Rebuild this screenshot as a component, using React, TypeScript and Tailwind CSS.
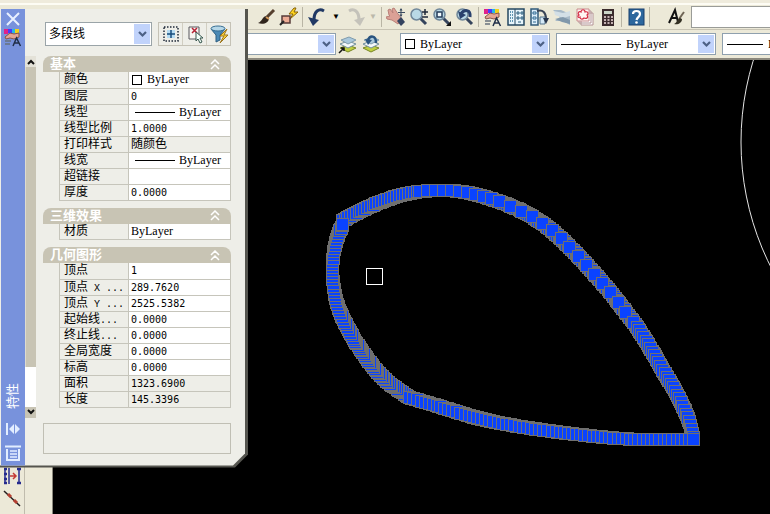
import { ReactNode, useState } from "react";

type Point = [number, number];

// Each run of the selected polyline has its own vertex density.
const runs: { gap: number; points: Point[] }[] = [
  { gap: 3, points: [[343, 221], [362, 211], [380, 203], [400, 196], [420, 192]] },
  { gap: 8, points: [[420, 192], [440, 191], [460, 192], [480, 196], [500, 202]] },
  { gap: 12, points: [[500, 202], [521, 211], [540, 222], [559, 237], [584, 262], [611, 293], [638, 328]] },
  { gap: 4, points: [[638, 328], [651, 349], [663, 370], [678, 396], [689, 420], [694, 440]] },
  { gap: 2, points: [[410, 398], [390, 384], [376, 370], [364, 354], [354, 339]] },
  { gap: 3, points: [[354, 339], [344, 320], [336, 298], [333, 270], [336, 244], [343, 225]] },
  { gap: 4, points: [[410, 398], [440, 407], [480, 419], [520, 427], [570, 434], [620, 439], [660, 440], [694, 440]] },
];

function samplePoints(points: Point[], gap: number) {
  const out: Point[] = [];
  for (let i = 0; i < points.length - 1; i++) {
    const p0 = points[Math.max(0, i - 1)];
    const p1 = points[i];
    const p2 = points[i + 1];
    const p3 = points[Math.min(points.length - 1, i + 2)];
    for (let t = 0; t < 1; t += 0.01) {
      const at = (k: 0 | 1) =>
        0.5 *
        (2 * p1[k] +
          (p2[k] - p0[k]) * t +
          (2 * p0[k] - 5 * p1[k] + 4 * p2[k] - p3[k]) * t * t +
          (3 * p1[k] - p0[k] - 3 * p2[k] + p3[k]) * t * t * t);
      const next: Point = [at(0), at(1)];
      const last = out[out.length - 1];
      if (!last || Math.hypot(next[0] - last[0], next[1] - last[1]) >= gap) out.push(next);
    }
  }
  out.push(points[points.length - 1]);
  return out;
}

// The tightly packed grips lie under the ones at each run's own spacing.
const grips = [
  ...runs.flatMap((run) => samplePoints(run.points, 2)),
  ...runs.flatMap((run) => samplePoints(run.points, run.gap)),
];

function Icon({ children }: { children: ReactNode }) {
  return (
    <svg width="20" height="20" viewBox="0 0 20 20" fill="none" aria-hidden="true">
      {children}
    </svg>
  );
}

function ToolButton({ label, children }: { label: string; children: ReactNode }) {
  return (
    <button type="button" aria-label={label} className="flex h-5 w-[23px] shrink-0 items-center justify-center">
      {children}
    </button>
  );
}

function Separator() {
  return <div className="mx-[2px] h-5 w-px shrink-0 bg-[#b9b5a5]" />;
}

function Chevron() {
  return (
    <span className="pointer-events-none flex h-full w-4 shrink-0 items-center justify-center bg-[#c1d3fb]">
      <svg width="9" height="7" viewBox="0 0 9 7" fill="none" aria-hidden="true">
        <path d="M1 1l3.500 3.500L8 1" stroke="#4d6185" strokeWidth="2.200" />
      </svg>
    </span>
  );
}

function PropertiesIcon() {
  return (
    <Icon>
      <path d="M1 2h4v5H1z" fill="#e0218a" />
      <path d="M5 2h4v4H5z" fill="#4a36ff" />
      <path d="M9 2h3v4H9z" fill="#24b8e8" />
      <path d="M12 2h4v4h-4z" fill="#f0d21c" />
      <path d="M2 10l5-4 4 1 5-1v4l-5 2-4-1-4 1z" fill="#e5a593" stroke="#875448" />
      <path d="M2 14h6M2 17h5" stroke="#67717d" strokeWidth="1.500" />
      <path d="M10 19l3.500-8 4 8M11.500 16h5" stroke="#202e48" strokeWidth="1.500" />
    </Icon>
  );
}

function Magnifier({ children }: { children?: ReactNode }) {
  return (
    <Icon>
      <path d="M11 11l6 6" stroke="#34435c" strokeWidth="3" />
      <circle cx="7.500" cy="7.500" r="5.500" fill="#b9d9e6" stroke="#70879a" strokeWidth="1.500" />
      {children}
    </Icon>
  );
}

function Layers({ children }: { children?: ReactNode }) {
  return (
    <Icon>
      <path d="M2 14l8-3 8 3-8 4z" fill="#bfcf42" stroke="#788625" />
      <path d="M2 10l8-3 8 3-8 4z" fill="#f4f8fa" stroke="#73909d" />
      <path d="M3 6l8-3 7 3-8 4z" fill="#a9c8dc" stroke="#809cad" />
      {children}
    </Icon>
  );
}

function StandardToolbar() {
  return (
    <div className="flex h-6 items-center overflow-hidden bg-[#ece9d8] pl-[254px]">
      <ToolButton label="画笔">
        <Icon>
          <path d="M18 3l-7 7" stroke="#56402f" strokeWidth="3" />
          <path d="M11 9c-5 0-4 5-9 7 5 2 11 0 11-5z" fill="#30251d" />
          <path d="M10 10l3 2" stroke="#d39a5a" strokeWidth="2" />
        </Icon>
      </ToolButton>
      <ToolButton label="特性匹配">
        <Icon>
          <path d="M15 1l-5 6h4l-3 5 8-7h-4l2-4z" fill="#ffd51e" stroke="#87630a" />
          <path d="M3 9h8v7H3z" fill="#ecab94" stroke="#573b38" strokeWidth="1.500" />
          <path d="M1 18l4-4" stroke="#252525" strokeWidth="2" />
        </Icon>
      </ToolButton>
      <Separator />
      <ToolButton label="放弃">
        <Icon>
          <path d="M17 4C12 1 7 4 7 13" stroke="#203864" strokeWidth="3" />
          <path d="M1 10l11 3-6 6z" fill="#203864" />
        </Icon>
      </ToolButton>
      <span className="w-4 text-center text-[8px] text-black">▼</span>
      <ToolButton label="重做">
        <Icon>
          <path d="M3 4c5-3 10 0 10 9" stroke="#c4c2ba" strokeWidth="3" />
          <path d="M19 10L8 13l6 6z" fill="#c4c2ba" />
        </Icon>
      </ToolButton>
      <span className="w-3 text-center text-[8px] text-[#bbb8aa]">▼</span>
      <Separator />
      <ToolButton label="实时平移">
        <Icon>
          <path d="M3 8l-1-5 2-1 3 4-1-4 2-1 4 6 4 5-4 5-6-4-5-1-1-2 4-1z" fill="#dba196" stroke="#b98079" />
          <path d="M11 14l4-4 4 5-4 4z" fill="#34435f" />
          <path d="M15 2v7M12 5.500h7" stroke="#3b4a60" />
          <path d="M13.500 3.500L15 1l1.500 2.500zM13.500 7.500L15 10l1.500-2.500z" fill="#3b4a60" />
        </Icon>
      </ToolButton>
      <ToolButton label="实时缩放">
        <Magnifier>
          <path d="M13 5h6M16 2v6M13 10h6" stroke="#202a3a" strokeWidth="1.500" />
        </Magnifier>
      </ToolButton>
      <ToolButton label="窗口缩放">
        <Magnifier>
          <path d="M5 5h5v5H5z" fill="#f2fbff" stroke="#253b58" strokeWidth="1.500" />
          <path d="M19 14v5h-5z" fill="#111" />
        </Magnifier>
      </ToolButton>
      <ToolButton label="缩放上一个">
        <Magnifier>
          <path d="M15 10c1-8-6-8-9-3" stroke="#29416d" strokeWidth="3" />
          <path d="M3 4l8 4-6 4z" fill="#29416d" />
        </Magnifier>
      </ToolButton>
      <Separator />
      <ToolButton label="特性">
        <PropertiesIcon />
      </ToolButton>
      <ToolButton label="设计中心">
        <Icon>
          <path d="M2 2h16v16H2z" fill="#e7f5fc" stroke="#244760" strokeWidth="1.500" />
          <path d="M9 2v16" stroke="#244760" />
          <path d="M4 5h3M4 8h3M4 11h3M4 14h3" stroke="#36779b" strokeDasharray="1 1" strokeWidth="1.500" />
          <path d="M11 5h2v2h-2zM15 5h2v2h-2zM11 10h2v2h-2zM15 10h2v2h-2zM12 15h3" stroke="#285c7c" />
        </Icon>
      </ToolButton>
      <ToolButton label="工具选项板">
        <Icon>
          <path d="M2 2h7v16H2z" fill="#dceefb" stroke="#2f5979" strokeWidth="1.500" />
          <path d="M4 5h3v2H4zM4 10h3v2H4zM4 15h3" stroke="#2f6891" />
          <path d="M8 4c6-2 9 2 9 8" stroke="#394456" strokeWidth="2" />
          <path d="M11 10h5v7h-5z" fill="#d5e9f7" stroke="#55758d" />
          <path d="M14 11h6l-3 6z" fill="#27354c" />
        </Icon>
      </ToolButton>
      <ToolButton label="图纸集管理器">
        <Icon>
          <path d="M1 3h8l9 4v11l-7-4H3l5-4z" fill="#a8bac8" />
          <path d="M2 4l9 2 7-2v5l-7 2-8-3z" fill="#d3dfe6" />
          <path d="M3 12l8-2 7 3v4l-8-2z" fill="#8198ab" />
        </Icon>
      </ToolButton>
      <ToolButton label="标记集管理器">
        <Icon>
          <path d="M6 6h12v12H6zM4 4h12v12H4z" fill="#fff" stroke="#b39294" />
          <path d="M2 2h12v12H2z" fill="#fff4f2" stroke="#c98a8d" />
          <path d="M4 8c-2-2 0-4 2-3 0-3 4-3 4 0 3-1 4 2 2 3 2 3-1 4-3 3-2 2-4 1-4-1-2 1-3-1-1-2z" stroke="#d52d45" strokeWidth="1.200" />
        </Icon>
      </ToolButton>
      <ToolButton label="快速计算器">
        <Icon>
          <path d="M4 2h12v17H4z" fill="#3b2b2d" />
          <path d="M6 4h8v3H6z" fill="#cad4c6" />
          <path d="M6 10h9M6 13h9M6 16h9" stroke="#f1dddd" strokeWidth="1.500" strokeDasharray="2 1.500" />
        </Icon>
      </ToolButton>
      <Separator />
      <ToolButton label="帮助">
        <Icon>
          <rect x="3" y="2" width="15" height="16" fill="#2c679e" stroke="#163e6d" />
          <path d="M7 7c0-4 7-4 7 0 0 3-3 3-3.500 6" stroke="#fff" strokeWidth="2.200" />
          <circle cx="10.500" cy="15.500" r="1.300" fill="#fff" />
        </Icon>
      </ToolButton>
      <Separator />
      <div className="ml-3">
        <ToolButton label="文字样式">
          <Icon>
            <path d="M3 16L9 3l3 12M5 11h6" stroke="#111" strokeWidth="2" />
            <path d="M18 5l-5 7" stroke="#6f6555" strokeWidth="2" />
            <path d="M14 11c-3 1-3 5-6 6 4 1 8-1 8-5z" fill="#333023" />
          </Icon>
        </ToolButton>
      </div>
      <input aria-label="样式名称" className="ml-1 h-[22px] min-w-12 flex-1 border border-r-0 border-[#9a9c98] bg-white px-1" />
    </div>
  );
}

function BoxedSelect({ label, className, children }: { label: string; className: string; children: ReactNode }) {
  return (
    <div className={`flex h-[22px] shrink-0 items-center border border-[#8fa0ae] bg-white p-px ${className}`}>
      {children}
      <select aria-label={label} className="h-full min-w-0 flex-1 appearance-none bg-transparent font-['Liberation_Serif',serif] text-[12px] outline-none">
        <option>ByLayer</option>
      </select>
      <Chevron />
    </div>
  );
}

function LayerToolbar() {
  return (
    <div className="flex h-[29px] items-center overflow-hidden border-t border-[#c8c4b4] bg-[#ece9d8] pl-[200px]">
      <div className="flex h-[22px] w-[136px] shrink-0 items-center border border-[#8fa0ae] bg-white p-px">
        <select aria-label="图层" className="h-full min-w-0 flex-1 appearance-none bg-transparent outline-none" />
        <Chevron />
      </div>
      <ToolButton label="将对象的图层置为当前">
        <Layers>
          <path d="M1 19l5-5M3 14h3v3" stroke="#151515" strokeWidth="1.500" />
        </Layers>
      </ToolButton>
      <ToolButton label="上一个图层">
        <Layers>
          <path d="M15 9c0-8-6-8-8-3" stroke="#29537f" strokeWidth="2.500" />
          <path d="M4 5l7 1-4 5z" fill="#29537f" />
        </Layers>
      </ToolButton>
      <div className="mx-1 h-full w-px bg-[#aaa797]" />
      <div className="ml-[10px] flex flex-1 gap-[6px]">
        <BoxedSelect label="颜色控制" className="w-[150px] pl-1">
          <span className="mr-[5px] h-[10px] w-[10px] border border-black" />
        </BoxedSelect>
        <BoxedSelect label="线型控制" className="w-[160px] pl-1">
          <span className="mr-[5px] h-px w-[60px] bg-black" />
        </BoxedSelect>
        <BoxedSelect label="线宽控制" className="w-[160px] pl-1">
          <span className="mr-[5px] h-px w-[36px] bg-black" />
        </BoxedSelect>
      </div>
    </div>
  );
}

type Row = { label: string; suffix?: string; value: string; kind?: "color" | "line" | "layer" | "readonly" };

const sections: { title: string; rows: Row[] }[] = [
  {
    title: "基本",
    rows: [
      { label: "颜色", value: "ByLayer", kind: "color" },
      { label: "图层", value: "0" },
      { label: "线型", value: "ByLayer", kind: "line" },
      { label: "线型比例", value: "1.0000" },
      { label: "打印样式", value: "随颜色", kind: "readonly" },
      { label: "线宽", value: "ByLayer", kind: "line" },
      { label: "超链接", value: "" },
      { label: "厚度", value: "0.0000" },
    ],
  },
  { title: "三维效果", rows: [{ label: "材质", value: "ByLayer", kind: "layer" }] },
  {
    title: "几何图形",
    rows: [
      { label: "顶点", value: "1" },
      { label: "顶点", suffix: " X ...", value: "289.7620" },
      { label: "顶点", suffix: " Y ...", value: "2525.5382" },
      { label: "起始线", suffix: "...", value: "0.0000" },
      { label: "终止线", suffix: "...", value: "0.0000" },
      { label: "全局宽度", value: "0.0000" },
      { label: "标高", value: "0.0000" },
      { label: "面积", value: "1323.6900", kind: "readonly" },
      { label: "长度", value: "145.3396", kind: "readonly" },
    ],
  },
];

function RowValue({ row, id }: { row: Row; id: string }) {
  if (row.kind === "readonly") {
    return (
      <output id={id} className="block h-[15px] px-[2px] font-['DejaVu_Sans_Mono','Noto_Sans_CJK_SC',monospace] text-[10px] leading-[15px]">
        {row.value === "随颜色" ? <span className="text-[12px]">{row.value}</span> : row.value}
      </output>
    );
  }
  if (row.kind) {
    return (
      <div className="flex h-[15px] items-center px-[2px]">
        {row.kind === "color" ? <span className="mr-[5px] ml-px h-[10px] w-[10px] border border-black" /> : null}
        {row.kind === "line" ? <span className="mr-1 ml-1 h-px w-10 bg-black" /> : null}
        <select id={id} className="h-[15px] min-w-0 flex-1 appearance-none bg-transparent font-['Liberation_Serif',serif] text-[12px] leading-[15px] outline-none">
          <option>{row.value}</option>
        </select>
      </div>
    );
  }
  return (
    <input
      id={id}
      defaultValue={row.value}
      className="block h-[15px] w-full bg-transparent px-[2px] font-['DejaVu_Sans_Mono',monospace] text-[10px] leading-[15px] outline-none"
    />
  );
}

function Section({ title, rows }: { title: string; rows: Row[] }) {
  const [open, setOpen] = useState(true);

  return (
    <section className="mb-[7px]">
      <button
        type="button"
        aria-expanded={open}
        onClick={() => setOpen(!open)}
        className="flex h-4 w-full items-center justify-between rounded-t-lg bg-[#c8c4b4] pr-[11px] pl-[7px] text-[13px] leading-4 font-bold text-white"
      >
        {title}
        <svg width="10" height="11" viewBox="0 0 10 11" fill="none" aria-hidden="true">
          <path d="M1 5l4-4 4 4M1 10l4-4 4 4" stroke="#fff" strokeWidth="1.500" />
        </svg>
      </button>
      {open ? (
        <div className="pl-4">
          <table className="w-full table-fixed border-collapse text-[12px]">
            <tbody>
              {rows.map((row, index) => {
                const id = `${title}-${index}`;
                return (
                  <tr key={id} className="h-4">
                    <th className="w-[69px] border-r border-b border-l border-[#c6c5bb] p-0 text-left font-normal">
                      <label htmlFor={id} className="block h-[15px] overflow-hidden pl-1 leading-[15px] whitespace-pre">
                        {row.label}
                        {row.suffix ? (
                          <span className="font-['Liberation_Mono',monospace] text-[10px]">{row.suffix}</span>
                        ) : null}
                      </label>
                    </th>
                    <td className={`border-r border-b border-[#c6c5bb] p-0 ${row.kind === "readonly" ? "" : "bg-white"}`}>
                      <RowValue row={row} id={id} />
                    </td>
                  </tr>
                );
              })}
            </tbody>
          </table>
        </div>
      ) : null}
    </section>
  );
}

function PaletteBar() {
  return (
    <div className="flex w-6 shrink-0 flex-col items-center bg-[#7892dc] pt-[2px] pb-[5px] text-white">
      <button type="button" aria-label="关闭" className="h-4 w-4">
        <svg width="16" height="16" viewBox="0 0 16 16" aria-hidden="true">
          <path d="M2 2l12 12M14 2L2 14" stroke="#e8f0ff" strokeWidth="2" />
        </svg>
      </button>
      <PropertiesIcon />
      <span className="mt-auto rotate-180 text-[13px] leading-[18px] [text-orientation:sideways] [writing-mode:vertical-rl]">
        特性
      </span>
      <button type="button" aria-label="自动隐藏" className="mt-[11px] h-4 w-4">
        <svg width="16" height="16" viewBox="0 0 16 16" aria-hidden="true">
          <path d="M1 2h2v12H1zM9 3v10L4 8zM10 3v10l5-5z" fill="#e2edff" />
        </svg>
      </button>
      <button type="button" aria-label="特性菜单" className="mt-2 h-4 w-4">
        <svg width="16" height="16" viewBox="0 0 16 16" fill="none" aria-hidden="true">
          <path d="M0 1.500h16M2 4v11h12V4" stroke="#e2edff" strokeWidth="2" />
          <path d="M5 6h7M5 9h7M5 12h7" stroke="#e2edff" strokeWidth="1.500" />
        </svg>
      </button>
    </div>
  );
}

function PaletteScrollbar() {
  return (
    <div className="mt-[47px] mb-12 flex w-[11px] shrink-0 flex-col bg-white">
      <button type="button" aria-label="向上滚动" className="flex h-[11px] items-center justify-center bg-[#e4e2d8]">
        <svg width="8" height="6" viewBox="0 0 8 6" fill="none" aria-hidden="true">
          <path d="M1 5l3-3 3 3" stroke="#111" strokeWidth="2" />
        </svg>
      </button>
      <div className="flex-1 border-l border-[#dedbd0] bg-[#c8c4b4]" />
      <div className="h-10" />
      <button type="button" aria-label="向下滚动" className="flex h-[11px] items-center justify-center bg-[#c8c4b4]">
        <svg width="8" height="6" viewBox="0 0 8 6" fill="none" aria-hidden="true">
          <path d="M1 1l3 3 3-3" stroke="#111" strokeWidth="2" />
        </svg>
      </button>
    </div>
  );
}

function PropertiesPalette() {
  return (
    <aside
      aria-label="特性"
      className="absolute top-[9px] left-0 w-[248px] bg-[#55554f] pr-[3px] pb-[2px] [clip-path:polygon(0_0,100%_0,100%_calc(100%_-_13px),calc(100%_-_13px)_100%,0_100%)]"
    >
      <div className="flex bg-[#eeeee8] pl-px [clip-path:polygon(0_0,100%_0,100%_calc(100%_-_12px),calc(100%_-_12px)_100%,0_100%)]">
        <PaletteBar />
        <PaletteScrollbar />
        <div className="min-w-0 flex-1 pr-[14px] pb-[12px] pl-[7px]">
          <div className="mt-[13px] mb-[10px] flex h-6 items-center">
            <div className="ml-[2px] flex h-6 min-w-0 flex-1 items-center border border-[#9aa4a8] bg-white p-px pl-[3px]">
              <select aria-label="对象类型" className="h-full min-w-0 flex-1 appearance-none bg-transparent text-[12px] outline-none">
                <option>多段线</option>
              </select>
              <Chevron />
            </div>
            <div className="ml-[6px] flex border border-[#c5c2b6]">
              <button type="button" aria-label="切换 PICKADD 系统变量" className="flex h-[22px] w-6 items-center justify-center border-r border-[#d1cec2]">
                <Icon>
                  <path d="M3 3h14v14H3z" stroke="#1f2a38" strokeWidth="1.500" strokeDasharray="1.500 1.500" />
                  <path d="M6 6h8v8H6z" fill="#b6dcf3" />
                  <path d="M10 6v8M6 10h8" stroke="#174c7c" strokeWidth="1.500" />
                </Icon>
              </button>
              <button type="button" aria-label="选择对象" className="flex h-[22px] w-6 items-center justify-center border-r border-[#d1cec2]">
                <Icon>
                  <path d="M4 3h10v12H4z" fill="#f8f5f1" stroke="#56565d" />
                  <path d="M7 4l5 5M12 4l-5 5" stroke="#b52235" strokeWidth="1.500" />
                  <path d="M11 8v9l2-2 2 4 2-1-2-4h3z" fill="#f2fff9" stroke="#38574f" />
                </Icon>
              </button>
              <button type="button" aria-label="快速选择" className="flex h-[22px] w-[23px] items-center justify-center">
                <Icon>
                  <path d="M2 5l5 6v7l4-2v-5l5-6z" fill="#4b89b5" stroke="#2e5f82" />
                  <ellipse cx="9" cy="4.500" rx="7" ry="2.500" fill="#b6d7e8" stroke="#366d92" />
                  <path d="M18 5l-7 7h4l-4 7 8-8h-4z" fill="#ffd63b" stroke="#9c741a" />
                </Icon>
              </button>
            </div>
          </div>
          {sections.map((section) => (
            <Section key={section.title} {...section} />
          ))}
          <div className="mt-[15px] h-[31px] border border-[#c0bfb4]" />
        </div>
      </div>
    </aside>
  );
}

function Drawing() {
  return (
    <svg className="absolute inset-0 h-full w-full" aria-label="绘图区">
      <g transform="translate(-53 -60)">
        <circle cx="1018" cy="142" r="277" fill="none" stroke="#e6e6e6" />
        <g fill="#0a43ff" stroke="#6f6f6f" shapeRendering="crispEdges">
          {grips.map(([x, y], index) => (
            <rect key={index} x={Math.round(x) - 6.5} y={Math.round(y) - 6.5} width="12" height="12" />
          ))}
        </g>
        <rect x="366.500" y="268.500" width="16" height="16" fill="none" stroke="#fff" shapeRendering="crispEdges" />
      </g>
    </svg>
  );
}

export default function App() {
  return (
    <main className="relative flex min-h-screen flex-col overflow-hidden bg-black font-['Liberation_Sans','Noto_Sans_CJK_SC',sans-serif] text-[12px] text-black">
      <header className="border-b-2 border-[#8b887d] bg-[#ece9d8]">
        <div className="h-[5px] border-b-2 border-[#fdfcf4] bg-[#efebdc]" />
        <StandardToolbar />
        <LayerToolbar />
      </header>
      <div className="flex flex-1">
        <nav aria-label="修改" className="flex w-[53px] shrink-0 border-r border-[#8b887d] bg-[#ece9d8]">
          <div className="flex w-[25px] flex-col items-center gap-[2px] border-r border-[#c0bcad] pt-[406px]">
            <ToolButton label="拉伸">
              <Icon>
                <path d="M3 2v16M7 2v16M17 2v16" stroke="#252b8e" strokeWidth="1.500" />
                <path d="M2 3h3M2 8h3M2 13h3M2 17h3M15 3h4M15 17h4" stroke="#252b8e" strokeWidth="2.500" />
                <path d="M8 10h6M11 7l3 3-3 3" stroke="#c43b34" strokeWidth="1.500" />
              </Icon>
            </ToolButton>
            <ToolButton label="打断于点">
              <Icon>
                <path d="M2 3l16 15" stroke="#251f1f" strokeWidth="1.500" />
                <path d="M6 6l3 3M12 12l3 3" stroke="#b43f30" strokeWidth="3" />
              </Icon>
            </ToolButton>
          </div>
        </nav>
        <div className="relative flex-1 bg-black">
          <Drawing />
        </div>
      </div>
      <PropertiesPalette />
    </main>
  );
}
